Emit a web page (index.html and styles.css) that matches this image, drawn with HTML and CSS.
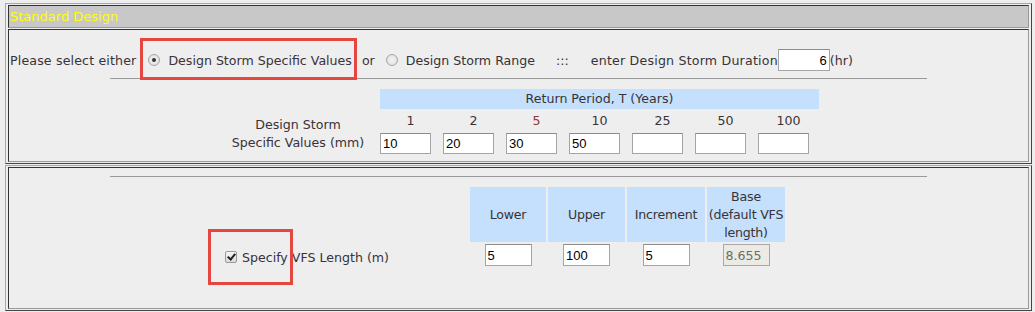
FILE: index.html
```html
<!DOCTYPE html>
<html lang="en">
<head>
    <meta charset="UTF-8">
    <title>Standard Design</title>
    <link rel="stylesheet" href="styles.css">
</head>
<body>

    <!-- Design storm section -->
    <div class="frame">
        <div class="title-cell">Standard Design</div>
        <div class="cell storm">
            <div class="choice-row">
                <span class="lead">Please select either</span>
                <label class="opt opt-a"><input type="radio" name="mode" checked><span>Design Storm Specific Values</span></label>
                <span class="or">or</span>
                <label class="opt opt-b"><input type="radio" name="mode"><span>Design Storm Range</span></label>
                <span class="sep">:::</span>
                <span class="dur-label">enter Design Storm Duration</span>
                <input type="text" class="dur" value="6">
                <span class="unit">(hr)</span>
            </div>
            <div class="rule"></div>
            <div class="rp-grid">
                <div class="rp-head">Return Period, T (Years)</div>
                <div class="rp-label">Design Storm<br>Specific Values (mm)</div>
                <div class="yr">1</div>
                <div class="yr">2</div>
                <div class="yr red">5</div>
                <div class="yr">10</div>
                <div class="yr">25</div>
                <div class="yr">50</div>
                <div class="yr">100</div>
                <input type="text" class="rp-in" value="10">
                <input type="text" class="rp-in" value="20">
                <input type="text" class="rp-in" value="30">
                <input type="text" class="rp-in" value="50">
                <input type="text" class="rp-in" value="">
                <input type="text" class="rp-in" value="">
                <input type="text" class="rp-in" value="">
            </div>
            <div class="callout callout-a"></div>
        </div>
    </div>

    <!-- VFS length section -->
    <div class="frame frame-2">
        <div class="cell vfs">
            <div class="rule"></div>
            <div class="vfs-grid">
                <div class="vfs-blank"></div>
                <div class="vh">Lower</div>
                <div class="vh">Upper</div>
                <div class="vh">Increment</div>
                <div class="vh">Base<br>(default VFS<br>length)</div>
                <div class="vfs-label"><input type="checkbox" class="chk" checked><span>Specify VFS Length (m)</span></div>
                <div class="vi"><input type="text" value="5"></div>
                <div class="vi"><input type="text" value="100"></div>
                <div class="vi"><input type="text" value="5"></div>
                <div class="vi"><input type="text" class="base" value="8.655" readonly></div>
            </div>
            <div class="callout callout-b"></div>
        </div>
    </div>

</body>
</html>
```

FILE: styles.css
```css
body {
    margin: 3px 0 0 0;
    background: #eeeeee;
    font-family: "DejaVu Sans", Verdana, sans-serif;
    font-size: 12.6px;
    color: #383338;
}
.frame {
    box-sizing: border-box;
    width: 1027px;
    margin-left: 5px;
    padding: 1px 2px;
    border: 1px solid;
    border-color: #a8a8a8 #444 #444 #a8a8a8;
    display: flex;
    flex-direction: column;
    gap: 1px;
}
.frame-2 {
    margin-top: 1px;
}
.cell {
    box-sizing: border-box;
    position: relative;
    border: 1px solid;
    border-color: #333 #999 #999 #333;
    background: #eeeeee;
}
.title-cell {
    box-sizing: border-box;
    height: 23px;
    border: 1px solid;
    border-color: #333 #999 #999 #333;
    background: #c8c8c8;
    color: #ffff00;
    font-size: 13px;
    line-height: 21px;
    padding-left: 1px;
}
.storm {
    height: 133px;
}
.vfs {
    height: 142px;
}

/* first row: radios and duration */
.choice-row {
    display: flex;
    align-items: center;
    height: 22px;
    margin-top: 19px;
    padding-left: 1px;
    white-space: nowrap;
}
.lead {
    letter-spacing: 0.15px;
}
.opt {
    display: flex;
    align-items: center;
}
.opt-a {
    margin-left: 12px;
}
.opt-b {
    margin-left: 11px;
}
.or {
    margin-left: 10px;
}
.sep {
    margin-left: 21px;
    margin-right: 22px;
}
.dur-label {
    letter-spacing: 0.2px;
}
.opt input {
    appearance: none;
    box-sizing: border-box;
    width: 12px;
    height: 12px;
    margin: 0 8px 0 0;
    border: 1px solid #a6a6a6;
    border-radius: 50%;
    background: radial-gradient(circle, #f4f4f4 0%, #dcdcdc 100%);
    position: relative;
}
.opt input:checked::after {
    content: "";
    position: absolute;
    left: 3px;
    top: 3px;
    width: 4px;
    height: 4px;
    border-radius: 50%;
    background: #333;
}
input[type="text"] {
    box-sizing: border-box;
    border: 1px solid #a5a5a5;
    border-top-color: #8c8c8c;
    background: #fff;
    font-family: "Liberation Sans", Arial, sans-serif;
    font-size: 13px;
    color: #000;
    padding: 0 2px;
    margin: 0;
    outline: none;
}
.dur {
    width: 52px;
    height: 22px;
    margin-left: 6px;
    margin-right: 5px;
    text-align: right;
}

.rule {
    width: 817px;
    margin: 7px auto 0;
    border-top: 1px solid #999;
}
.vfs .rule {
    margin-top: 8px;
}

/* return period table */
.rp-grid {
    display: grid;
    grid-template-columns: 160px repeat(7, 61px);
    grid-template-rows: 20px 24px 21px;
    column-gap: 2px;
    justify-content: center;
    margin-top: 10px;
}
.rp-head {
    grid-column: 2 / span 7;
    grid-row: 1;
    background: #c4e0fc;
    text-align: center;
    line-height: 20px;
}
.rp-label {
    grid-column: 1;
    grid-row: 2 / span 2;
    align-self: center;
    text-align: center;
    line-height: 18px;
    padding-top: 4px;
}
.yr {
    grid-row: 2;
    text-align: center;
    line-height: 24px;
}
.yr.red {
    color: #8a3a2c;
}
.rp-in {
    grid-row: 3;
    width: 51px;
    height: 21px;
}

/* VFS length table */
.vfs-grid {
    display: grid;
    grid-template-columns: 322px 76px 77px 78px 78px;
    grid-template-rows: 55px 26px;
    gap: 2px;
    margin: 10px 0 0 137px;
}
.vfs-label {
    display: flex;
    align-items: center;
    justify-content: center;
}
.chk {
    appearance: none;
    box-sizing: border-box;
    width: 12px;
    height: 12px;
    margin: 0 5px 0 0;
    border: 1px solid #9a9a9a;
    border-radius: 2px;
    background: linear-gradient(#f6f6f6, #dadada);
    position: relative;
}
.chk:checked::after {
    content: "";
    position: absolute;
    left: 3px;
    top: 0px;
    width: 3px;
    height: 6px;
    border: solid #222;
    border-width: 0 2px 2px 0;
    transform: rotate(40deg);
}
.vh {
    background: #c4e0fc;
    display: flex;
    align-items: center;
    justify-content: center;
    text-align: center;
    line-height: 18px;
    white-space: nowrap;
    letter-spacing: -0.2px;
}
.vi {
    display: flex;
    justify-content: center;
    align-items: flex-start;
}
.vi input[type="text"] {
    width: 47px;
    height: 22px;
}
.vi input.base {
    background: #ebebe4;
    color: #6d6d6d;
    font-family: "DejaVu Sans", Verdana, sans-serif;
    font-size: 12.6px;
    border-color: #a8a8a8;
}

/* red highlight boxes drawn over the form */
.callout {
    position: absolute;
    box-sizing: border-box;
    border: 3px solid #e5463f;
}
.callout-a {
    left: 131px;
    top: 8px;
    width: 217px;
    height: 42px;
}
.callout-b {
    left: 199px;
    top: 61px;
    width: 85px;
    height: 56px;
}
```
